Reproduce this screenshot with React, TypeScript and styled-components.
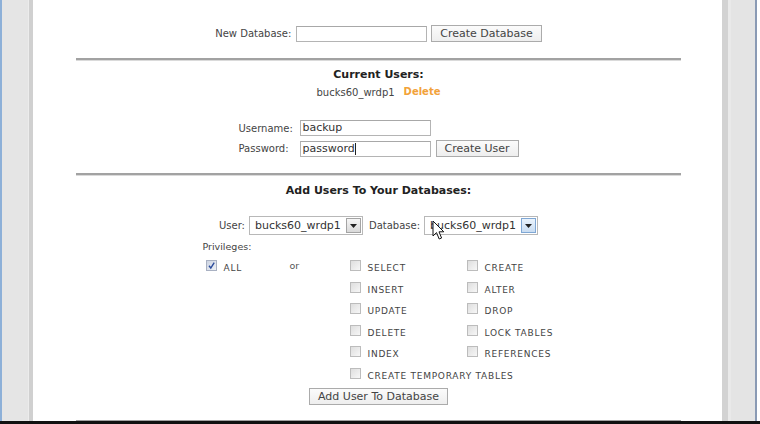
import React from "react";
import styled, { createGlobalStyle, css } from "styled-components";

const GlobalStyle = createGlobalStyle`
  html, body {
    margin: 0;
    padding: 0;
    height: 100%;
    overflow: hidden;
    background: #fff;
  }
  body {
    font-family: "DejaVu Sans", Verdana, sans-serif;
    color: #444;
  }
`;

const columnA = ["SELECT", "INSERT", "UPDATE", "DELETE", "INDEX", "CREATE TEMPORARY TABLES"];
const columnB = ["CREATE", "ALTER", "DROP", "LOCK TABLES", "REFERENCES"];

const Check = ({ checked }: { checked?: boolean }) => (
  <Box $checked={checked}>
    {checked && (
      <svg width="9" height="9" viewBox="0 0 9 9">
        <path d="M2 4.8 L3.8 7 L7.2 1.6" fill="none" stroke="#2b4c9c" strokeWidth="1.4" />
      </svg>
    )}
  </Box>
);

const Select = ({ value, hover }: { value: string; hover?: boolean }) => (
  <SelectBox>
    <SelectValue>{value}</SelectValue>
    <ArrowButton $hover={hover}>
      <svg width="7" height="4" viewBox="0 0 7 4">
        <path d="M0 0 H7 L3.5 4 Z" fill="#222" />
      </svg>
    </ArrowButton>
    {hover && (
      <Cursor width="13" height="21" viewBox="0 0 13 21">
        <path
          d="M1 1 L1 16 L4.5 12.6 L7.2 19 L9.6 18 L7 11.8 L11.8 11.8 Z"
          fill="#fff"
          stroke="#111"
          strokeWidth="1"
          strokeLinejoin="round"
        />
      </Cursor>
    )}
  </SelectBox>
);

export default function App() {
  return (
    <>
      <GlobalStyle />
      <Screen>
        <Window>
          <LeftGutter />
          <Panel>
            <Content>
              <InlineRow>
                <Label>New Database:</Label>
                <TextField $width={131} />
                <Button>Create Database</Button>
              </InlineRow>

              <Rule />

              <Heading $top={7}>Current Users:</Heading>
              <UserLine>
                <span>bucks60_wrdp1</span>
                <DeleteLink>Delete</DeleteLink>
              </UserLine>

              <UserForm>
                <Label>Username:</Label>
                <TextField $width={131}>backup</TextField>
                <span />
                <Label>Password:</Label>
                <TextField $width={131}>
                  password<Caret />
                </TextField>
                <Button>Create User</Button>
              </UserForm>

              <Rule $gap={16} />

              <Heading $top={8}>Add Users To Your Databases:</Heading>
              <AssignRow>
                <Label>User:</Label>
                <Select value="bucks60_wrdp1" />
                <Label>Database:</Label>
                <Select value="bucks60_wrdp1" hover />
              </AssignRow>

              <Privileges>
                <Label>Privileges:</Label>
                <PrivGrid>
                  <CheckItem $col={1} $row={1} $inset={3}>
                    <Check checked />
                    <CheckText>ALL</CheckText>
                  </CheckItem>
                  <OrText>or</OrText>
                  {columnA.map((p, i) => (
                    <CheckItem key={p} $col={3} $row={i + 1}>
                      <Check />
                      <CheckText>{p}</CheckText>
                    </CheckItem>
                  ))}
                  {columnB.map((p, i) => (
                    <CheckItem key={p} $col={4} $row={i + 1}>
                      <Check />
                      <CheckText>{p}</CheckText>
                    </CheckItem>
                  ))}
                </PrivGrid>
              </Privileges>

              <ButtonRow>
                <Button>Add User To Database</Button>
              </ButtonRow>

              <Rule $gap={15} />
            </Content>
          </Panel>
          <RightGutter />
        </Window>
        <BlackBar />
      </Screen>
    </>
  );
}

const Screen = styled.div`
  height: 424px;
  display: flex;
  flex-direction: column;
  overflow: hidden;
`;

const Window = styled.div`
  flex: 1;
  display: flex;
  min-height: 0;
`;

const LeftGutter = styled.div`
  width: 27px;
  background: #e5e5e5;
  border-left: 2px solid #8db0d8;
  border-right: 4px solid #d0d0d0;
  box-shadow: inset -1px 0 0 #ececec;
  flex-shrink: 0;
`;

const RightGutter = styled.div`
  width: 27px;
  background: #e4e4e4;
  border-left: 6px solid #d2d2d2;
  box-shadow: inset 3px 0 0 #e9e9e9;
  border-right: 2px solid #8a9ab4;
  margin-right: 3px;
  flex-shrink: 0;
`;

const Panel = styled.div`
  flex: 1;
  background: #fff;
`;

const Content = styled.div`
  margin: 0 41px 0 43px;
  padding-top: 25px;
  display: flex;
  flex-direction: column;
`;

const Label = styled.span`
  font-size: 10px;
  color: #444;
  white-space: nowrap;
`;

const InlineRow = styled.div`
  display: flex;
  align-items: center;
  justify-content: center;
  gap: 4px;
  height: 17px;

  ${Label} {
    margin-right: 1px;
  }
`;

const TextField = styled.div<{ $width: number }>`
  width: ${(p) => p.$width}px;
  height: 16px;
  box-sizing: border-box;
  border: 1px solid #b4b4b4;
  border-top-color: #a8a8a8;
  padding: 0 2px;
  font-size: 11px;
  line-height: 14px;
  color: #333;
  background: #fff;
  display: flex;
  align-items: center;
`;

const Caret = styled.span`
  display: inline-block;
  width: 1px;
  height: 12px;
  background: #222;
`;

const Button = styled.div`
  height: 17px;
  box-sizing: border-box;
  padding: 0 8px;
  border: 1px solid #ababab;
  background: linear-gradient(#fbfbfb, #eeeeee);
  font-size: 11px;
  line-height: 15px;
  color: #444;
  white-space: nowrap;
`;

const Rule = styled.div<{ $gap?: number }>`
  margin-top: ${(p) => p.$gap ?? 16}px;
  height: 2px;
  background: #a2a2a2;
  border-bottom: 1px solid #dadada;
`;

const Heading = styled.div<{ $top?: number }>`
  margin-top: ${(p) => p.$top ?? 6}px;
  text-align: center;
  font-size: 11px;
  font-weight: bold;
  line-height: 14px;
  color: #222;
`;

const UserLine = styled.div`
  margin-top: 4px;
  display: flex;
  justify-content: center;
  align-items: center;
  gap: 9px;
  font-size: 10px;
  line-height: 14px;
  color: #444;
`;

const DeleteLink = styled.span`
  color: #f2a23a;
  font-weight: bold;
  font-size: 10px;
  margin-top: -3px;
`;

const UserForm = styled.div`
  margin: 20px auto 0;
  display: grid;
  grid-template-columns: 61px 136px 83px;
  row-gap: 4px;
  align-items: center;
`;

const AssignRow = styled.div`
  margin-top: 18px;
  display: flex;
  justify-content: center;
  align-items: center;
  gap: 4px;

  & > ${Label}:nth-of-type(2) {
    margin-left: 2px;
  }
`;

const SelectBox = styled.div`
  position: relative;
  width: 114px;
  height: 19px;
  box-sizing: border-box;
  border: 1px solid #b8b8b8;
  background: #fff;
  display: flex;
  align-items: center;
  padding: 0 1px 0 5px;
`;

const SelectValue = styled.span`
  flex: 1;
  font-size: 11px;
  color: #333;
  white-space: nowrap;
`;

const ArrowButton = styled.div<{ $hover?: boolean }>`
  width: 15px;
  height: 15px;
  box-sizing: border-box;
  border: 1px solid #a4a4a4;
  background: linear-gradient(#f6f6f6, #d9d9d9);
  display: flex;
  align-items: center;
  justify-content: center;

  ${(p) =>
    p.$hover &&
    css`
      border-color: #7fa7d4;
      background: linear-gradient(#eaf3fc, #c9dcf1);
    `}
`;

const Cursor = styled.svg`
  position: absolute;
  left: 7px;
  top: 3px;
`;

const Privileges = styled.div`
  margin: 6px auto 0;
  width: 352px;
  display: flex;
  flex-direction: column;
  gap: 7px;

  & > ${Label} {
    line-height: 12px;
    font-size: 9.5px;
  }
`;

const PrivGrid = styled.div`
  display: grid;
  grid-template-columns: 87px 60px 117px 88px;
  grid-auto-rows: 14px;
  row-gap: 7.6px;
`;

const CheckItem = styled.div<{ $col: number; $row: number; $inset?: number }>`
  grid-column: ${(p) => p.$col};
  grid-row: ${(p) => p.$row};
  padding-left: ${(p) => p.$inset ?? 0}px;
  display: flex;
  align-items: flex-start;
  gap: 7px;
  white-space: nowrap;
`;

const Box = styled.span<{ $checked?: boolean }>`
  width: 11px;
  height: 11px;
  box-sizing: border-box;
  border: 1px solid #bcbcbc;
  background: linear-gradient(135deg, #dedede, #f7f7f7);
  display: flex;
  align-items: center;
  justify-content: center;
  flex-shrink: 0;

  ${(p) =>
    p.$checked &&
    css`
      border-color: #a9b1c2;
      background: linear-gradient(135deg, #cdd4e2, #eef1f6);
    `}
`;

const CheckText = styled.span`
  padding-top: 3px;
  font-size: 9px;
  line-height: 11px;
  letter-spacing: 0.75px;
  color: #444;
`;

const OrText = styled.span`
  grid-column: 2;
  grid-row: 1;
  font-size: 9.5px;
  line-height: 11px;
  color: #555;
`;

const ButtonRow = styled.div`
  margin-top: 6px;
  display: flex;
  justify-content: center;
`;

const BlackBar = styled.div`
  height: 3px;
  background: #111;
  flex-shrink: 0;
`;
